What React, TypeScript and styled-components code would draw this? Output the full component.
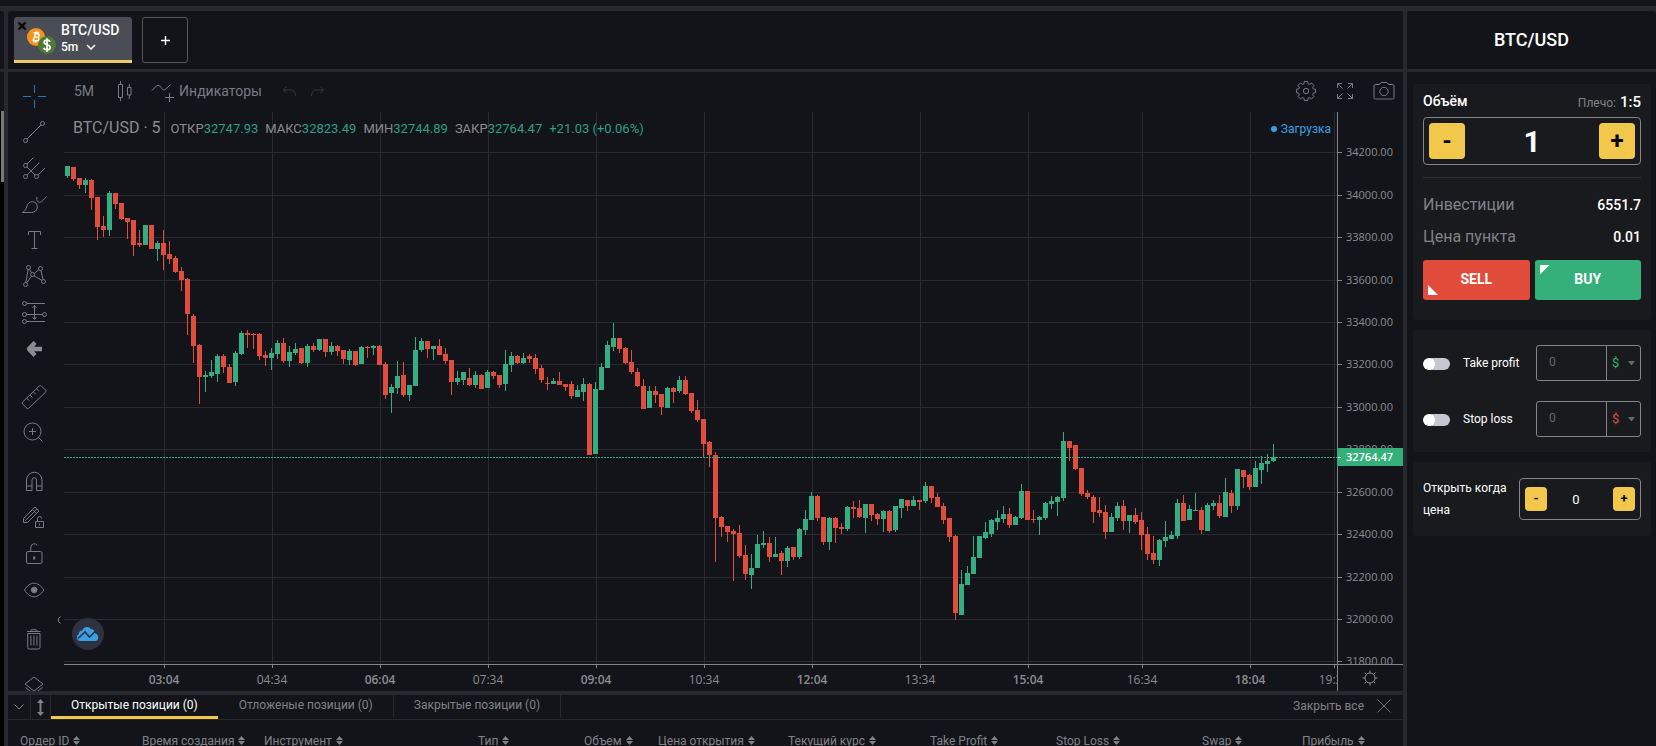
import React, { useState } from "react";
import styled, { createGlobalStyle, css } from "styled-components";

const color = {
  bg: "#131419",
  card: "#191a1e",
  divider: "#27292e",
  grid: "#292b30",
  axis: "#84858a",
  icon: "#787b86",
  muted: "#808287",
  white: "#ffffff",
  yellow: "#f1c84c",
  red: "#e04b3a",
  green: "#35b07a",
  candleUp: "#34ad83",
  candleDown: "#e14d3d",
  teal: "#2e9f87",
  blue: "#39a0e5",
};

const sans = `Roboto, "Liberation Sans", sans-serif`;
const axisFont = `"Open Sans", "Noto Sans", sans-serif`;

const GlobalStyle = createGlobalStyle`
  *, *::before, *::after { box-sizing: border-box; }
  body {
    margin: 0;
    background: ${color.bg};
    color: ${color.white};
    font-family: ${sans};
    font-size: 13px;
    overflow: hidden;
  }
  button, input, select { font-family: inherit; margin: 0; }
  button { cursor: pointer; }
`;

/* ---------- shell ---------- */

const Page = styled.div`
  display: flex;
  flex-direction: column;
  height: 100vh;
  padding-top: 6px;
`;

const Shell = styled.div`
  flex: 1;
  min-height: 0;
  display: flex;
  gap: 4px;
  border-top: 5px solid ${color.divider};
  background: ${color.divider};
`;

const Column = styled.div<{ $width?: string }>`
  flex: ${(p) => (p.$width ? `0 0 ${p.$width}` : "1 1 0")};
  min-width: 0;
  display: flex;
  flex-direction: column;
  gap: 3px;
`;

const HeadPanel = styled.div<{ $center?: boolean }>`
  flex: 0 0 58px;
  display: flex;
  align-items: center;
  justify-content: ${(p) => (p.$center ? "center" : "flex-start")};
  gap: 10px;
  padding: 0 6px;
  background: ${color.bg};
  border-radius: 2px 2px 0 0;
`;

const RailHead = styled.div`
  flex: 0 0 58px;
  background: ${color.bg};
  border-radius: 0 2px 0 0;
`;

const RailBody = styled.div`
  flex: 1;
  background: #000;
  border-top: 39px solid ${color.bg};
`;

const RailThumb = styled.div`
  height: 71px;
  margin-left: 1px;
  background: #77787a;
`;

/* ---------- symbol tabs ---------- */

const SymbolTab = styled.div`
  display: flex;
  width: 118px;
  height: 46px;
  padding: 4px 0 0 3px;
  background: #4a4d55;
  border-bottom: 3px solid #efca66;
  border-radius: 3px 3px 0 0;
`;

const CloseTab = styled.button`
  display: flex;
  width: 10px;
  height: 10px;
  padding: 0;
  border: 0;
  background: none;
`;

const PairLogo = styled.svg`
  flex: none;
  margin-top: 6px;
  width: 29px;
  height: 28px;
`;

const SymbolText = styled.div`
  display: flex;
  flex-direction: column;
  align-items: flex-start;
  margin-left: 5px;
  padding-top: 1px;
`;

const SymbolName = styled.span`
  font-size: 14px;
  font-weight: 500;
  line-height: 17px;
`;

const Timeframe = styled.button`
  display: flex;
  align-items: center;
  gap: 8px;
  padding: 0;
  border: 0;
  background: none;
  color: ${color.white};
  font-size: 12px;
  font-weight: 500;
  line-height: 16px;
`;

const AddTab = styled.button`
  width: 46px;
  height: 46px;
  padding: 0;
  border: 1px solid #55575d;
  border-radius: 3px;
  background: none;
`;

const SideTitle = styled.h1`
  margin: 0;
  font-size: 18px;
  font-weight: 500;
  line-height: 22px;
`;

/* ---------- chart ---------- */

const ChartPanel = styled.div`
  flex: 1;
  min-height: 0;
  display: flex;
  background: ${color.bg};
`;

const DrawBar = styled.div`
  flex: 0 0 56px;
  display: flex;
  flex-direction: column;
  gap: 13px;
  padding: 6px 4px 0 0;
  overflow: hidden;
`;

const DrawGroup = styled.div`
  flex: none;
`;

const DrawButton = styled.button`
  display: flex;
  align-items: center;
  justify-content: center;
  width: 100%;
  height: 36px;
  padding: 0;
  border: 0;
  background: none;
`;

const Icon28 = styled.svg<{ $tone?: string }>`
  flex: none;
  display: block;
  width: 28px;
  height: 28px;
  fill: none;
  stroke: ${(p) => p.$tone ?? color.icon};
`;

const ChartColumn = styled.div`
  flex: 1;
  min-width: 0;
  display: flex;
  flex-direction: column;
`;

const ChartToolbar = styled.div`
  flex: 0 0 40px;
  display: flex;
  align-items: center;
  padding: 0 5px 2px 10px;
`;

const ToolButton = styled.button<{ $gap?: number }>`
  display: flex;
  align-items: center;
  gap: 2px;
  margin-left: ${(p) => p.$gap ?? 0}px;
  padding: 0;
  border: 0;
  background: none;
  color: ${color.icon};
  font-size: 14px;
  line-height: 18px;
`;

const Spacer = styled.div`
  flex: 1;
`;

const PlotRow = styled.div`
  flex: 1;
  min-height: 0;
  display: flex;
`;

const Plot = styled.div`
  position: relative;
  flex: 1;
  min-width: 0;
`;

const PlotSvg = styled.svg`
  display: block;
  width: 100%;
  height: 100%;
`;

const TimeSvg = styled.svg`
  display: block;
  width: 100%;
  height: 26px;
`;

const Legend = styled.div`
  position: absolute;
  top: 6px;
  left: 9px;
  display: flex;
  align-items: baseline;
  color: #8b8c90;
  font-size: 13px;
  line-height: 20px;
`;

const LegendTitle = styled.span`
  margin-right: 10px;
  font-size: 16px;
`;

const LegendItem = styled.span`
  margin-right: 7px;
`;

const Up = styled.span`
  color: ${color.teal};
`;

const Loading = styled.div`
  position: absolute;
  top: 8px;
  right: 6px;
  display: flex;
  align-items: center;
  gap: 4px;
  color: ${color.blue};
  font-size: 12px;
  line-height: 18px;
`;

const Dot = styled.i`
  width: 6px;
  height: 6px;
  border-radius: 50%;
  background: ${color.blue};
`;

const LogoBadge = styled.a`
  position: absolute;
  left: 8px;
  bottom: 14px;
  display: flex;
  align-items: center;
  justify-content: center;
  width: 32px;
  height: 32px;
  border-radius: 50%;
  background: #2e3240;
`;

const CollapseBar = styled.button`
  position: absolute;
  left: -8px;
  bottom: 36px;
  display: flex;
  width: 6px;
  height: 16px;
  padding: 0;
  border: 0;
  background: none;
`;

const PriceAxis = styled.div`
  flex: 0 0 66px;
  border-left: 1px solid ${color.axis};
  position: relative;
`;

const PriceTag = styled.div`
  position: absolute;
  top: 336px;
  left: -1px;
  right: 0;
  padding-left: 9px;
  background: ${color.green};
  font-family: ${axisFont};
  font-size: 11px;
  font-weight: 600;
  line-height: 18px;

  &::before {
    content: "";
    position: absolute;
    left: 1px;
    top: 9px;
    width: 3px;
    height: 1px;
    background: #fff;
  }
`;

const TimeRow = styled.div`
  flex: 0 0 27px;
  display: flex;
  border-top: 1px solid ${color.axis};
`;

const TimeAxis = styled.div`
  flex: 1;
  min-width: 0;
`;

const AxisCorner = styled.button`
  flex: 0 0 66px;
  display: flex;
  align-items: center;
  justify-content: center;
  padding: 0 2px 0 0;
  border: 0;
  border-left: 1px solid ${color.axis};
  background: none;
`;

const AxisText = styled.text<{ $size?: number; $bold?: boolean }>`
  fill: #8b8c90;
  font-family: ${axisFont};
  font-size: ${(p) => p.$size ?? 11}px;
  font-weight: ${(p) => (p.$bold ? 600 : 400)};
`;

/* ---------- positions ---------- */

const Positions = styled.section`
  flex: 0 0 51px;
  margin-top: 1px;
  background: ${color.bg};
  overflow: hidden;
`;

const PositionsBar = styled.div`
  display: flex;
  height: 25px;
  border-bottom: 1px solid ${color.divider};
`;

const BarIconButton = styled.button<{ $width: number }>`
  display: flex;
  align-items: center;
  justify-content: center;
  width: ${(p) => p.$width}px;
  padding: 0;
  border: 0;
  border-right: 1px solid ${color.divider};
  background: none;
`;

const PositionTab = styled.button<{ $active?: boolean }>`
  padding: 0 20px;
  border: 0;
  border-right: 1px solid ${color.divider};
  background: none;
  color: ${color.muted};
  font-size: 12px;
  line-height: 21px;
  border-bottom: 3px solid transparent;
  ${(p) =>
    p.$active &&
    css`
      color: ${color.white};
      border-right-color: transparent;
      box-shadow: inset 0 -3px 0 ${color.yellow};
      border-bottom: 0;
      padding-bottom: 3px;
    `}
`;

const CloseAll = styled.button`
  display: flex;
  align-items: center;
  gap: 13px;
  padding: 0 12px 2px 0;
  border: 0;
  background: none;
  color: ${color.muted};
  font-size: 12px;
  line-height: 18px;
`;

const OrdersTable = styled.table`
  width: 100%;
  table-layout: fixed;
  border-collapse: collapse;
`;

const HeadCell = styled.th<{ $width: number }>`
  width: ${(p) => p.$width}px;
  padding: 13px 0 0 12px;
  color: ${color.muted};
  font-size: 12px;
  font-weight: 400;
  line-height: 16px;
  text-align: left;
  white-space: nowrap;
`;

const SortIcon = styled.svg`
  width: 7px;
  height: 9px;
  margin-left: 4px;
  fill: ${color.muted};
`;

/* ---------- side panel ---------- */

const SideBody = styled.div`
  flex: 1;
  display: flex;
  flex-direction: column;
  gap: 10px;
  padding: 12px 5px 0 6px;
  background: ${color.bg};
`;

const Card = styled.section<{ $pad: string }>`
  display: flex;
  flex-direction: column;
  padding: ${(p) => p.$pad};
  background: ${color.card};
  border-radius: 3px;
`;

const Row = styled.div`
  display: flex;
  align-items: center;
  justify-content: space-between;
`;

const VolumeHead = styled(Row)`
  height: 22px;
  margin-bottom: 5px;
  line-height: 22px;
`;

const FieldLabel = styled.label`
  font-size: 14px;
  font-weight: 500;
`;

const Leverage = styled.span`
  padding-top: 2px;
  color: ${color.muted};
  font-size: 12px;
`;

const LeverageValue = styled.b`
  margin-left: 4px;
  color: ${color.white};
  font-size: 15px;
  font-weight: 500;
`;

const Stepper = styled.div<{ $small?: boolean }>`
  display: flex;
  align-items: center;
  justify-content: space-between;
  width: ${(p) => (p.$small ? "122px" : "100%")};
  height: ${(p) => (p.$small ? 42 : 48)}px;
  padding: 0 5px;
  border: 1px solid ${color.axis};
  border-radius: 4px;
`;

const StepButton = styled.button<{ $small?: boolean }>`
  flex: none;
  width: ${(p) => (p.$small ? 22 : 36)}px;
  height: ${(p) => (p.$small ? 24 : 36)}px;
  padding: 0;
  border: 0;
  border-radius: 4px;
  background: ${color.yellow};
  color: #000;
  font-size: ${(p) => (p.$small ? 13 : 24)}px;
  font-weight: 700;
  line-height: 22px;
`;

const StepInput = styled.input<{ $small?: boolean }>`
  flex: 1;
  width: 0;
  min-width: 0;
  padding: 0 ${(p) => (p.$small ? 8 : 0)}px 0 0;
  border: 0;
  outline: 0;
  background: none;
  color: ${color.white};
  font-size: ${(p) => (p.$small ? 13 : 30)}px;
  font-weight: ${(p) => (p.$small ? 400 : 700)};
  text-align: center;
`;

const Rule = styled.hr`
  width: 100%;
  height: 1px;
  margin: 12px 0 10px;
  border: 0;
  background: #303136;
`;

const InfoRow = styled(Row)`
  height: 32px;
  color: ${color.muted};
  font-size: 16px;
`;

const InfoValue = styled.span`
  padding-top: 2px;
  color: ${color.white};
  font-size: 14px;
  font-weight: 500;
`;

const TradeButtons = styled.div`
  display: grid;
  grid-template-columns: 1fr 1fr;
  gap: 5px;
  margin-top: 8px;
`;

const TradeButton = styled.button<{ $side: "sell" | "buy" }>`
  position: relative;
  height: 40px;
  padding: 0 0 3px;
  border: 0;
  border-radius: 3px;
  background: ${(p) => (p.$side === "sell" ? color.red : color.green)};
  color: ${color.white};
  font-size: 14px;
  font-weight: 700;

  &::after {
    content: "";
    position: absolute;
    left: 5px;
    ${(p) => (p.$side === "sell" ? "bottom: 5px;" : "top: 5px;")}
    width: 10px;
    height: 10px;
    background: ${color.white};
    clip-path: ${(p) =>
      p.$side === "sell" ? "polygon(0 0, 100% 100%, 0 100%)" : "polygon(0 0, 100% 0, 0 100%)"};
  }
`;

const LimitList = styled.div`
  display: flex;
  flex-direction: column;
  gap: 20px;
`;

const LimitLabel = styled.label`
  display: flex;
  align-items: center;
  gap: 13px;
  font-size: 12px;
  font-weight: 400;
`;

const Toggle = styled.input`
  appearance: none;
  width: 27px;
  height: 12px;
  margin: 0;
  margin-top: 2px;
  border-radius: 6px;
  background: radial-gradient(circle at 6px 6px, #fff 6px, #c5c7d3 6px);

  &:checked {
    background: radial-gradient(circle at 21px 6px, #fff 6px, ${color.green} 6px);
  }
`;

const AmountBox = styled.div`
  display: flex;
  width: 105px;
  height: 36px;
  border: 1px solid ${color.axis};
  border-radius: 3px;
`;

const AmountInput = styled.input`
  flex: 1;
  min-width: 0;
  padding: 0 12px 2px;
  border: 0;
  border-right: 1px solid ${color.axis};
  outline: 0;
  background: none;
  color: #66686d;
  font-size: 12px;
`;

const UnitBox = styled.div`
  position: relative;
  flex: 0 0 33px;
  display: flex;
`;

const UnitSelect = styled.select<{ $tone: string }>`
  appearance: none;
  width: 100%;
  padding: 0 0 2px 5px;
  border: 0;
  outline: 0;
  background: none;
  color: ${(p) => p.$tone};
  font-size: 13px;
`;

const UnitArrow = styled.svg`
  position: absolute;
  right: 5px;
  top: 15px;
  width: 7px;
  height: 5px;
  fill: #66686d;
  pointer-events: none;
`;

const PendingLabel = styled.label`
  width: 90px;
  font-size: 12px;
  line-height: 22px;
`;

/* ---------- chart data ---------- */

// [direction, high, body top, body bottom, low] in plot pixels
type Candle = [0 | 1, number, number, number, number];
const candles: Candle[] = [
  [1, 54, 54, 64, 66], [0, 55, 55, 67, 69], [0, 66, 66, 73, 77], [1, 66, 68, 73, 81], [0, 67, 68, 86, 98],
  [0, 85, 85, 115, 128], [0, 104, 114, 118, 125], [1, 79, 81, 118, 124], [0, 81, 81, 92, 97], [0, 91, 91, 107, 108],
  [0, 106, 106, 110, 127], [0, 108, 108, 133, 144], [0, 118, 131, 133, 135], [1, 113, 113, 133, 133], [0, 113, 113, 137, 137],
  [1, 129, 131, 137, 149], [0, 118, 131, 143, 158], [0, 129, 142, 147, 152], [0, 144, 146, 160, 161], [0, 155, 159, 168, 179],
  [0, 166, 167, 202, 223], [0, 202, 204, 234, 251], [0, 232, 233, 265, 292], [1, 259, 263, 265, 280], [1, 248, 260, 264, 266],
  [1, 242, 244, 262, 270], [0, 242, 244, 255, 261], [0, 252, 255, 271, 271], [1, 239, 241, 270, 274], [1, 219, 221, 242, 243],
  [0, 218, 221, 223, 236], [0, 221, 222, 223, 237], [0, 221, 222, 244, 248], [0, 239, 243, 246, 254], [1, 236, 241, 246, 258],
  [1, 228, 231, 242, 247], [0, 226, 231, 249, 251], [1, 234, 240, 249, 255], [1, 231, 237, 241, 243], [0, 236, 236, 251, 252],
  [1, 232, 234, 251, 255], [0, 231, 234, 238, 240], [1, 227, 227, 238, 239], [0, 227, 227, 240, 245], [1, 230, 234, 240, 243],
  [0, 233, 234, 239, 244], [0, 238, 238, 247, 252], [1, 237, 239, 248, 253], [0, 239, 239, 253, 254], [1, 234, 235, 252, 252],
  [0, 234, 235, 236, 246], [1, 233, 234, 236, 243], [0, 233, 234, 253, 253], [0, 250, 252, 283, 287], [1, 272, 275, 281, 301],
  [1, 249, 264, 276, 282], [0, 250, 263, 283, 285], [1, 273, 273, 283, 289], [1, 225, 238, 274, 274], [1, 226, 229, 238, 240],
  [0, 229, 229, 237, 246], [1, 234, 234, 237, 248], [0, 227, 234, 243, 243], [0, 236, 242, 249, 252], [0, 248, 248, 270, 283],
  [1, 259, 266, 270, 273], [1, 260, 260, 268, 273], [0, 256, 266, 273, 274], [1, 259, 263, 273, 276], [0, 262, 263, 277, 277],
  [1, 258, 260, 276, 276], [0, 259, 260, 264, 267], [0, 263, 263, 273, 276], [1, 238, 252, 272, 279], [1, 240, 244, 253, 260],
  [0, 243, 244, 251, 252], [1, 241, 246, 251, 252], [0, 242, 244, 247, 251], [0, 242, 246, 257, 262], [0, 253, 256, 268, 271],
  [0, 265, 271, 272, 278], [1, 266, 269, 272, 272], [0, 260, 269, 273, 273], [0, 272, 272, 275, 279], [0, 269, 272, 284, 287],
  [1, 273, 278, 285, 285], [1, 266, 272, 280, 289], [0, 271, 272, 343, 343], [1, 270, 277, 342, 342], [1, 251, 255, 278, 278],
  [1, 229, 233, 256, 256], [1, 211, 226, 235, 239], [0, 226, 226, 237, 241], [0, 235, 236, 251, 252], [0, 238, 250, 260, 262],
  [0, 256, 260, 274, 275], [0, 267, 274, 297, 297], [1, 274, 279, 296, 296], [0, 274, 279, 283, 291], [0, 282, 282, 295, 303],
  [1, 275, 276, 296, 296], [0, 275, 276, 280, 291], [1, 264, 268, 279, 281], [0, 264, 268, 282, 283], [0, 281, 281, 299, 301],
  [0, 288, 298, 308, 310], [0, 307, 307, 332, 345], [0, 329, 330, 343, 355], [0, 340, 343, 406, 450], [0, 404, 405, 415, 425],
  [0, 414, 414, 420, 430], [0, 417, 419, 422, 469], [0, 413, 421, 444, 446], [0, 433, 443, 462, 468], [1, 442, 456, 463, 477],
  [1, 423, 432, 456, 456], [1, 419, 431, 433, 436], [0, 425, 431, 445, 450], [1, 425, 442, 445, 445], [0, 439, 441, 449, 463],
  [1, 434, 436, 449, 455], [0, 435, 435, 445, 448], [1, 416, 417, 445, 447], [1, 398, 407, 418, 423], [1, 380, 384, 408, 408],
  [0, 383, 384, 406, 409], [0, 405, 405, 430, 433], [1, 405, 406, 430, 438], [0, 405, 406, 416, 431], [0, 411, 415, 417, 422],
  [1, 394, 395, 417, 419], [0, 389, 395, 397, 406], [0, 388, 396, 405, 406], [1, 392, 392, 406, 421], [0, 392, 392, 403, 409],
  [0, 401, 402, 407, 413], [1, 398, 399, 407, 420], [0, 398, 399, 419, 421], [1, 394, 394, 418, 420], [1, 387, 387, 396, 406],
  [0, 388, 388, 394, 399], [1, 384, 388, 394, 394], [0, 388, 388, 390, 398], [1, 370, 374, 389, 391], [0, 374, 374, 386, 391],
  [0, 381, 385, 395, 395], [0, 391, 394, 408, 412], [0, 406, 406, 425, 430], [0, 423, 424, 501, 508], [1, 458, 472, 503, 503],
  [1, 454, 461, 473, 473], [1, 424, 445, 462, 462], [1, 424, 424, 446, 446], [1, 410, 420, 426, 427], [1, 407, 408, 422, 425],
  [1, 398, 406, 410, 418], [1, 394, 402, 407, 411], [0, 396, 402, 413, 416], [1, 404, 405, 413, 413], [1, 372, 379, 406, 407],
  [0, 379, 379, 408, 408], [0, 398, 407, 408, 411], [1, 404, 405, 408, 423], [1, 390, 391, 406, 408], [1, 384, 389, 392, 397],
  [1, 384, 385, 390, 404], [1, 320, 329, 386, 389], [0, 329, 329, 336, 349], [0, 333, 333, 357, 358], [0, 356, 356, 382, 384],
  [0, 378, 381, 385, 387], [0, 383, 385, 400, 411], [0, 385, 398, 401, 405], [0, 393, 400, 420, 427], [1, 401, 405, 420, 420],
  [1, 390, 394, 406, 409], [0, 388, 394, 409, 418], [1, 403, 403, 409, 421], [0, 396, 403, 410, 412], [0, 400, 408, 423, 438],
  [0, 415, 422, 442, 448], [0, 424, 441, 448, 452], [1, 427, 428, 448, 454], [1, 409, 425, 429, 435], [1, 419, 423, 427, 427],
  [1, 387, 391, 424, 427], [0, 383, 391, 409, 409], [1, 393, 397, 408, 408], [1, 381, 398, 399, 399], [0, 395, 398, 418, 422],
  [1, 391, 393, 419, 419], [1, 388, 391, 394, 398], [0, 383, 391, 404, 406], [1, 366, 380, 405, 405], [0, 378, 381, 394, 401],
  [1, 357, 357, 394, 398], [0, 358, 358, 365, 376], [0, 362, 363, 375, 378], [1, 349, 356, 375, 375], [1, 344, 351, 358, 372],
  [1, 342, 349, 352, 360], [1, 332, 345, 349, 350],
];

const STEP = 6;
const PRICE_Y = 345;

const priceTicks: [string, number][] = [
  ["34200.00", 40], ["34000.00", 83], ["33800.00", 125], ["33600.00", 168], ["33400.00", 210],
  ["33200.00", 252], ["33000.00", 295], ["32800.00", 337], ["32600.00", 380], ["32400.00", 422],
  ["32200.00", 465], ["32000.00", 507], ["31800.00", 549],
];

const timeTicks: [string, number][] = [
  ["03:04", 100], ["04:34", 208], ["06:04", 316], ["07:34", 424], ["09:04", 532], ["10:34", 640],
  ["12:04", 748], ["13:34", 856], ["15:04", 964], ["16:34", 1078], ["18:04", 1186], ["19:34", 1270],
];

const columns: [string, number][] = [
  ["Ордер ID", 122], ["Время создания", 122], ["Инструмент", 214], ["Тип", 106], ["Объем", 74],
  ["Цена открытия", 130], ["Текущий курс", 142], ["Take Profit", 126], ["Stop Loss", 146],
  ["Swap", 100], ["Прибыль", 113],
];

/* ---------- drawing tools ---------- */

const tools: { label: string; tone?: string; art: React.ReactNode }[][] = [
  [
    { label: "Перекрестие", tone: "#2277bd", art: <path d="M14.5 3v8M14.5 18v8M3 14.5h8M18 14.5h8" /> },
    {
      label: "Линия тренда",
      art: <><circle cx="5.5" cy="22.5" r="2" /><circle cx="22.5" cy="5.5" r="2" /><path d="M7 21L21 7" /></>,
    },
    {
      label: "Вилы",
      art: (
        <>
          <circle cx="5.5" cy="11.5" r="2" /><circle cx="5.5" cy="22.5" r="2" /><circle cx="16.5" cy="22.5" r="2" />
          <path d="M7 10l6.5-6.5M7 21L19.5 8.500M18 21l7-7M7 13l8 8" />
        </>
      ),
    },
    {
      label: "Кисть",
      art: (
        <>
          <path d="M2.500 22.500c2.500-1.500 3.800-3.400 4.300-5.800.8-3.200 2.700-5 5.500-5 3 0 5 2.300 5 5.200 0 3.300-2.500 5.600-5.800 5.600z" />
          <path d="M17 7c-.9 3.300.5 5.300 2.700 5.300 2.800 0 4.300-3.800 7-5.800" />
        </>
      ),
    },
    { label: "Текст", art: <path d="M8.500 9V5.500h12V9M14.500 5.500v17M11.500 22.500h6" /> },
    {
      label: "Паттерны",
      art: (
        <>
          <circle cx="5.500" cy="22.500" r="2" /><circle cx="8.500" cy="5.500" r="2" /><circle cx="12.500" cy="12.500" r="2" />
          <circle cx="20.500" cy="6.500" r="2" /><circle cx="23.500" cy="19.500" r="2" />
          <path d="M5.800 20.500L8.200 7.500M9.500 7.200l2 3.600M14.200 11.400l4.700-3.700M20.900 8.500l2.200 9M6.700 20.800l4.700-6.600M14 13.800l8 4.600" />
        </>
      ),
    },
    {
      label: "Прогнозирование",
      art: (
        <>
          <circle cx="4.500" cy="5.500" r="2" /><circle cx="4.500" cy="16.500" r="2" /><circle cx="4.500" cy="23.500" r="2" />
          <circle cx="24.500" cy="16.500" r="2" />
          <path d="M6.500 5.500H25M6.500 16.500h16M6.500 23.500H25M14.500 8v13M12.500 10l2-2.500 2 2.500M12.500 19l2 2.500 2-2.500" />
        </>
      ),
    },
    {
      label: "Стрелка",
      tone: "#8a8c96",
      art: <path d="M15 8.500L9 15l6 6.500M9.500 15H22" strokeWidth="4.400" strokeLinejoin="round" />,
    },
  ],
  [
    {
      label: "Линейка",
      art: (
        <>
          <path d="M19.300 2.900a1.500 1.500 0 0 1 2 0l4.300 4.300a1.500 1.500 0 0 1 0 2L8.800 25.200a1.500 1.500 0 0 1-2 0L2.600 21a1.500 1.500 0 0 1 0-2z" />
          <path d="M16.500 5.700l2.500 2.500M13.200 8.800l2.500 2.500M10 12l2.500 2.500M6.700 15.100l2.500 2.500" />
        </>
      ),
    },
    {
      label: "Увеличить",
      art: <><circle cx="12.500" cy="12.500" r="8.500" /><path d="M12.500 9v7M9 12.500h7M18.500 18.500l4 4" /></>,
    },
  ],
  [
    {
      label: "Магнит",
      art: <path d="M6.500 22.500V12a7.750 7.750 0 0 1 15.500 0v10.500h-5.500V12a2.250 2.250 0 0 0-4.500 0v10.500zM6.500 18H12M16.500 18H22" />,
    },
    {
      label: "Режим рисования",
      art: (
        <>
          <path d="M3.500 14.500L15 3l4 4L7.500 18.500h-4zM5.500 16.500L17 5M12.500 5.500l4 4" />
          <path d="M15.500 17.500h8v6h-8zM17.500 17.500v-3a2 2 0 0 1 4 0M19.500 19.500v2" />
        </>
      ),
    },
    {
      label: "Заблокировать",
      art: (
        <>
          <rect x="6.500" y="11.500" width="15.500" height="12" rx="1.500" />
          <path d="M10.800 11.500V7a3.500 3.500 0 0 1 6.500-1.500" /><path d="M14.200 16.500v3" strokeWidth="2" />
        </>
      ),
    },
    {
      label: "Скрыть",
      art: (
        <>
          <path d="M4.500 14c2.800-4.500 6-6.800 9.500-6.800s6.900 2.300 9.800 6.800c-2.900 4.500-6.300 6.800-9.800 6.800S7.300 18.500 4.500 14z" />
          <circle cx="14.200" cy="14" r="2.800" fill={color.icon} />
        </>
      ),
    },
  ],
  [
    {
      label: "Удалить",
      art: <path d="M7 6.500h13.500M10.500 6.200l.8-1.500h5l.8 1.500M7.700 8.500v14a1.500 1.500 0 0 0 1.500 1.500h9.300a1.500 1.500 0 0 0 1.500-1.500v-14zM10.900 10.500v10M13.900 10.500v10M16.900 10.500v10" />,
    },
  ],
  [
    { label: "Объекты", art: <path d="M14 3L23 10l-9 7-9-7zM5.500 13.500l8.500 6.500 8.500-6.500" /> },
  ],
];

const gearPath = (() => {
  const pts: string[] = [];
  const teeth = 8;
  for (let i = 0; i < teeth; i++) {
    const a = (i * 2 * Math.PI) / teeth;
    [[-0.27, 7.6], [-0.18, 9.7], [0.18, 9.7], [0.27, 7.6]].forEach(([d, r]) => {
      pts.push(`${(14 + r * Math.sin(a + d)).toFixed(2)} ${(14 - r * Math.cos(a + d)).toFixed(2)}`);
    });
  }
  return `M${pts.join("L")}Z`;
})();

const Sort = () => (
  <SortIcon viewBox="0 0 7 9" aria-hidden="true"><path d="M3.500 0L7 4H0zM3.500 9L7 5H0z" /></SortIcon>
);

function DrawingTools() {
  return (
    <DrawBar>
      {tools.map((group, i) => (
        <DrawGroup key={i}>
          {group.map((t) => (
            <DrawButton key={t.label} aria-label={t.label}>
              <Icon28 viewBox="0 0 28 28" $tone={t.tone}>{t.art}</Icon28>
            </DrawButton>
          ))}
        </DrawGroup>
      ))}
    </DrawBar>
  );
}

function Toolbar() {
  return (
    <ChartToolbar>
      <ToolButton>5M</ToolButton>
      <ToolButton $gap={16} aria-label="Свечи">
        <Icon28 viewBox="0 0 28 28">
          <path d="M8.500 7.500h4v13h-4zM10.500 4v3.500M10.500 20.500V24M17.500 10.500h3.500V18h-3.500zM19.300 7v3.500M19.300 18v4" />
        </Icon28>
      </ToolButton>
      <ToolButton $gap={11}>
        <Icon28 viewBox="0 0 28 28">
          <path d="M3 13.500l4.500-4.700q1.500-1.300 3 0l3.500 3.900q1 .9 2 0l5.500-5M20.500 16v9M16 20.500h9" />
        </Icon28>
        Индикаторы
      </ToolButton>
      <ToolButton $gap={13} aria-label="Отменить">
        <Icon28 viewBox="0 0 28 28" $tone="#35373d"><path d="M11.500 9.500L8.500 13l3 3M8.500 13h8q4 .5 4 6" /></Icon28>
      </ToolButton>
      <ToolButton aria-label="Повторить">
        <Icon28 viewBox="0 0 28 28" $tone="#35373d"><path d="M17.500 9.500l3 3.500-3 3M20.500 13h-8q-4 .5-4 6" /></Icon28>
      </ToolButton>
      <Spacer />
      <ToolButton aria-label="Настройки">
        <Icon28 viewBox="0 0 28 28"><path d={gearPath} strokeLinejoin="round" /><circle cx="14" cy="14" r="2.700" /></Icon28>
      </ToolButton>
      <ToolButton $gap={11} aria-label="На весь экран">
        <Icon28 viewBox="0 0 28 28">
          <path d="M6.500 11V6.500H11M17 6.500h4.500V11M21.500 17v4.500H17M11 21.500H6.500V17M6.500 6.500l5 5M21.500 6.500l-5 5M21.500 21.500l-5-5M6.500 21.500l5-5" />
        </Icon28>
      </ToolButton>
      <ToolButton $gap={11} aria-label="Снимок">
        <Icon28 viewBox="0 0 28 28">
          <path d="M5.500 7.500h4l1.500-2h6l1.500 2h4q1.500 0 1.500 1.500v11.500q0 1.500-1.500 1.500h-17Q4 22 4 20.500V9q0-1.500 1.500-1.500z" />
          <circle cx="14" cy="14.500" r="4.200" />
        </Icon28>
      </ToolButton>
    </ChartToolbar>
  );
}

function Chart() {
  return (
    <ChartColumn>
      <Toolbar />
      <PlotRow>
        <Plot>
          <PlotSvg shapeRendering="crispEdges" aria-label="График BTC/USD">
            {priceTicks.map(([p, y]) => <rect key={p} x="0" y={y} width="100%" height="1" fill={color.grid} />)}
            {timeTicks.map(([t, x]) => <rect key={t} x={x} y="0" width="1" height="100%" fill={color.grid} />)}
            {candles.map(([up, high, top, bottom, low], i) => (
              <g key={i} fill={up ? color.candleUp : color.candleDown}>
                <rect x={i * STEP + 3} y={high} width="1" height={low - high} />
                <rect x={i * STEP + 1} y={top} width="5" height={bottom - top} />
              </g>
            ))}
            <line x1="0" x2="100%" y1={PRICE_Y + 0.5} y2={PRICE_Y + 0.5} stroke={color.candleUp} strokeDasharray="2 1" />
          </PlotSvg>
          <Legend>
            <LegendTitle>BTC/USD · 5</LegendTitle>
            <LegendItem>ОТКР<Up>32747.93</Up></LegendItem>
            <LegendItem>МАКС<Up>32823.49</Up></LegendItem>
            <LegendItem>МИН<Up>32744.89</Up></LegendItem>
            <LegendItem>ЗАКР<Up>32764.47</Up></LegendItem>
            <Up>+21.03 (+0.06%)</Up>
          </Legend>
          <Loading><Dot />Загрузка</Loading>
          <CollapseBar aria-label="Свернуть панель">
            <svg width="6" height="16" viewBox="0 0 6 16" fill="none" stroke={color.axis}>
              <path d="M4.500 4.500Q0 8 4.500 11.500" />
            </svg>
          </CollapseBar>
          <LogoBadge href="#" aria-label="Графики">
            <svg width="22" height="16" viewBox="0 0 22 16">
              <path d="M3.500 15A3.500 3.500 0 0 1 1.800 8.300 4 4 0 0 1 5.400 4.200 5 5 0 0 1 14 3a4 4 0 0 1 4 4.200A4.200 4.200 0 0 1 19 15z" fill={color.blue} />
              <path d="M1 12.500L8 6l4.500 5L18.500 5" fill="none" stroke="#2e3240" strokeWidth="1.600" />
            </svg>
          </LogoBadge>
        </Plot>
        <PriceAxis>
          <PlotSvg shapeRendering="crispEdges">
            {priceTicks.map(([p, y]) => (
              <g key={p}>
                <rect x="0" y={y} width="4" height="1" fill={color.axis} />
                <AxisText x="8" y={y + 4}>{p}</AxisText>
              </g>
            ))}
          </PlotSvg>
          <PriceTag>32764.47</PriceTag>
        </PriceAxis>
      </PlotRow>
      <TimeRow>
        <TimeAxis>
          <TimeSvg shapeRendering="crispEdges">
            {timeTicks.map(([t, x], i) => (
              <g key={t}>
                <rect x={x} y="0" width="1" height="3" fill={color.axis} />
                <AxisText x={x} y="19" textAnchor="middle" $size={12} $bold={i % 2 === 0}>{t}</AxisText>
              </g>
            ))}
          </TimeSvg>
        </TimeAxis>
        <AxisCorner aria-label="Настройки шкалы">
          <svg width="16" height="16" viewBox="0 0 16 16" fill="none" stroke="#8a8c90">
            <circle cx="8" cy="8" r="5" />
            <path d="M8 .5V3M8 13v2.500M.5 8H3M13 8h2.500M2.700 2.700l1.700 1.700M11.600 11.600l1.700 1.700M2.700 13.300l1.700-1.700M11.600 4.400l1.700-1.700" />
          </svg>
        </AxisCorner>
      </TimeRow>
    </ChartColumn>
  );
}

function PositionsPanel() {
  const [tab, setTab] = useState(0);
  const tabs = ["Открытые позиции (0)", "Отложеные позиции (0)", "Закрытые позиции (0)"];
  return (
    <Positions>
      <PositionsBar>
        <BarIconButton $width={23} aria-label="Свернуть">
          <svg width="10" height="6" viewBox="0 0 10 6" fill="none" stroke={color.axis}><path d="M.5.500L5 5 9.500.500" /></svg>
        </BarIconButton>
        <BarIconButton $width={20} aria-label="Изменить высоту">
          <svg width="7" height="17" viewBox="0 0 7 17" fill={color.muted}>
            <path d="M3.500 0L7 4H4.500v9H7l-3.500 4L0 13h2.500V4H0z" />
          </svg>
        </BarIconButton>
        {tabs.map((t, i) => (
          <PositionTab key={t} $active={i === tab} onClick={() => setTab(i)}>{t}</PositionTab>
        ))}
        <Spacer />
        <CloseAll>
          Закрыть все
          <svg width="14" height="14" viewBox="0 0 14 14" stroke="#6f7176"><path d="M.5.500l13 13M13.500.500l-13 13" /></svg>
        </CloseAll>
      </PositionsBar>
      <OrdersTable>
        <thead>
          <tr>
            {columns.map(([name, w]) => <HeadCell key={name} scope="col" $width={w}>{name}<Sort /></HeadCell>)}
          </tr>
        </thead>
      </OrdersTable>
    </Positions>
  );
}

function LimitField({ label, id, tone }: { label: string; id: string; tone: string }) {
  return (
    <Row>
      <LimitLabel><Toggle type="checkbox" />{label}</LimitLabel>
      <AmountBox>
        <AmountInput id={id} aria-label={label} defaultValue="0" />
        <UnitBox>
          <UnitSelect $tone={tone} aria-label={`${label}: единица`} defaultValue="$">
            <option>$</option>
            <option>%</option>
          </UnitSelect>
          <UnitArrow viewBox="0 0 7 5"><path d="M0 0h7L3.500 4.500z" /></UnitArrow>
        </UnitBox>
      </AmountBox>
    </Row>
  );
}

function OrderForm() {
  const [volume, setVolume] = useState(1);
  const [price, setPrice] = useState(0);
  return (
    <SideBody>
      <Card $pad="6px 10px 20px">
        <VolumeHead>
          <FieldLabel htmlFor="volume">Объём</FieldLabel>
          <Leverage>Плечо:<LeverageValue>1:5</LeverageValue></Leverage>
        </VolumeHead>
        <Stepper>
          <StepButton aria-label="Уменьшить объём" onClick={() => setVolume(Math.max(1, volume - 1))}>-</StepButton>
          <StepInput id="volume" value={volume} onChange={(e) => setVolume(Number(e.target.value) || 0)} />
          <StepButton aria-label="Увеличить объём" onClick={() => setVolume(volume + 1)}>+</StepButton>
        </Stepper>
        <Rule />
        <InfoRow>Инвестиции<InfoValue>6551.7</InfoValue></InfoRow>
        <InfoRow>Цена пункта<InfoValue>0.01</InfoValue></InfoRow>
        <TradeButtons>
          <TradeButton $side="sell">SELL</TradeButton>
          <TradeButton $side="buy">BUY</TradeButton>
        </TradeButtons>
      </Card>
      <Card $pad="15px 10px">
        <LimitList>
          <LimitField id="take-profit" label="Take profit" tone={color.green} />
          <LimitField id="stop-loss" label="Stop loss" tone={color.red} />
        </LimitList>
      </Card>
      <Card $pad="15px 10px">
        <Row>
          <PendingLabel htmlFor="open-price">Открыть когда цена</PendingLabel>
          <Stepper $small>
            <StepButton $small aria-label="Уменьшить цену" onClick={() => setPrice(Math.max(0, price - 1))}>-</StepButton>
            <StepInput $small id="open-price" value={price} onChange={(e) => setPrice(Number(e.target.value) || 0)} />
            <StepButton $small aria-label="Увеличить цену" onClick={() => setPrice(price + 1)}>+</StepButton>
          </Stepper>
        </Row>
      </Card>
    </SideBody>
  );
}

export default function App() {
  return (
    <>
      <GlobalStyle />
      <Page>
        <Shell>
          <Column $width="4px">
            <RailHead />
            <RailBody><RailThumb /></RailBody>
          </Column>
          <Column as="main">
            <HeadPanel>
              <SymbolTab>
                <CloseTab aria-label="Закрыть вкладку">
                  <svg width="10" height="10" viewBox="0 0 10 10" stroke="#000" strokeWidth="2.400"><path d="M1.500 1.500l7 7M8.500 1.500l-7 7" /></svg>
                </CloseTab>
                <PairLogo viewBox="0 0 29 28">
                  <circle cx="9" cy="10" r="9" fill="#f7931a" />
                  <g transform="rotate(14 9 10)" fill="none" stroke="#fff" strokeWidth="1.500">
                    <path d="M5.500 6.300h4.500a1.800 1.800 0 0 1 0 3.600H7.200M6 13.700h4.300a1.900 1.900 0 0 0 0-3.800M7.500 6.300v7.400M8 4.300v2M10 4.300v2M8 13.700v2M10 13.700v2" />
                  </g>
                  <circle cx="20" cy="18" r="9" fill="#4b7b35" />
                  <path d="M23 14.800q-.6-1.700-3-1.700-2.900 0-2.900 2.200 0 1.800 2.900 2.500 3.200.7 3.200 2.700 0 2.300-3.200 2.300-2.700 0-3.200-2M20 11.200v13.600" fill="none" stroke="#fff" strokeWidth="1.700" />
                </PairLogo>
                <SymbolText>
                  <SymbolName>BTC/USD</SymbolName>
                  <Timeframe>
                    5m
                    <svg width="10" height="6" viewBox="0 0 10 6" fill="none" stroke="#fff" strokeWidth="1.500"><path d="M1 1l4 4 4-4" /></svg>
                  </Timeframe>
                </SymbolText>
              </SymbolTab>
              <AddTab aria-label="Добавить вкладку">
                <svg width="9" height="9" viewBox="0 0 9 9" stroke="#fff" strokeWidth="1.400"><path d="M4.500 0v9M0 4.500h9" /></svg>
              </AddTab>
            </HeadPanel>
            <ChartPanel>
              <DrawingTools />
              <Chart />
            </ChartPanel>
            <PositionsPanel />
          </Column>
          <Column as="aside" $width="249px">
            <HeadPanel $center><SideTitle>BTC/USD</SideTitle></HeadPanel>
            <OrderForm />
          </Column>
        </Shell>
      </Page>
    </>
  );
}
